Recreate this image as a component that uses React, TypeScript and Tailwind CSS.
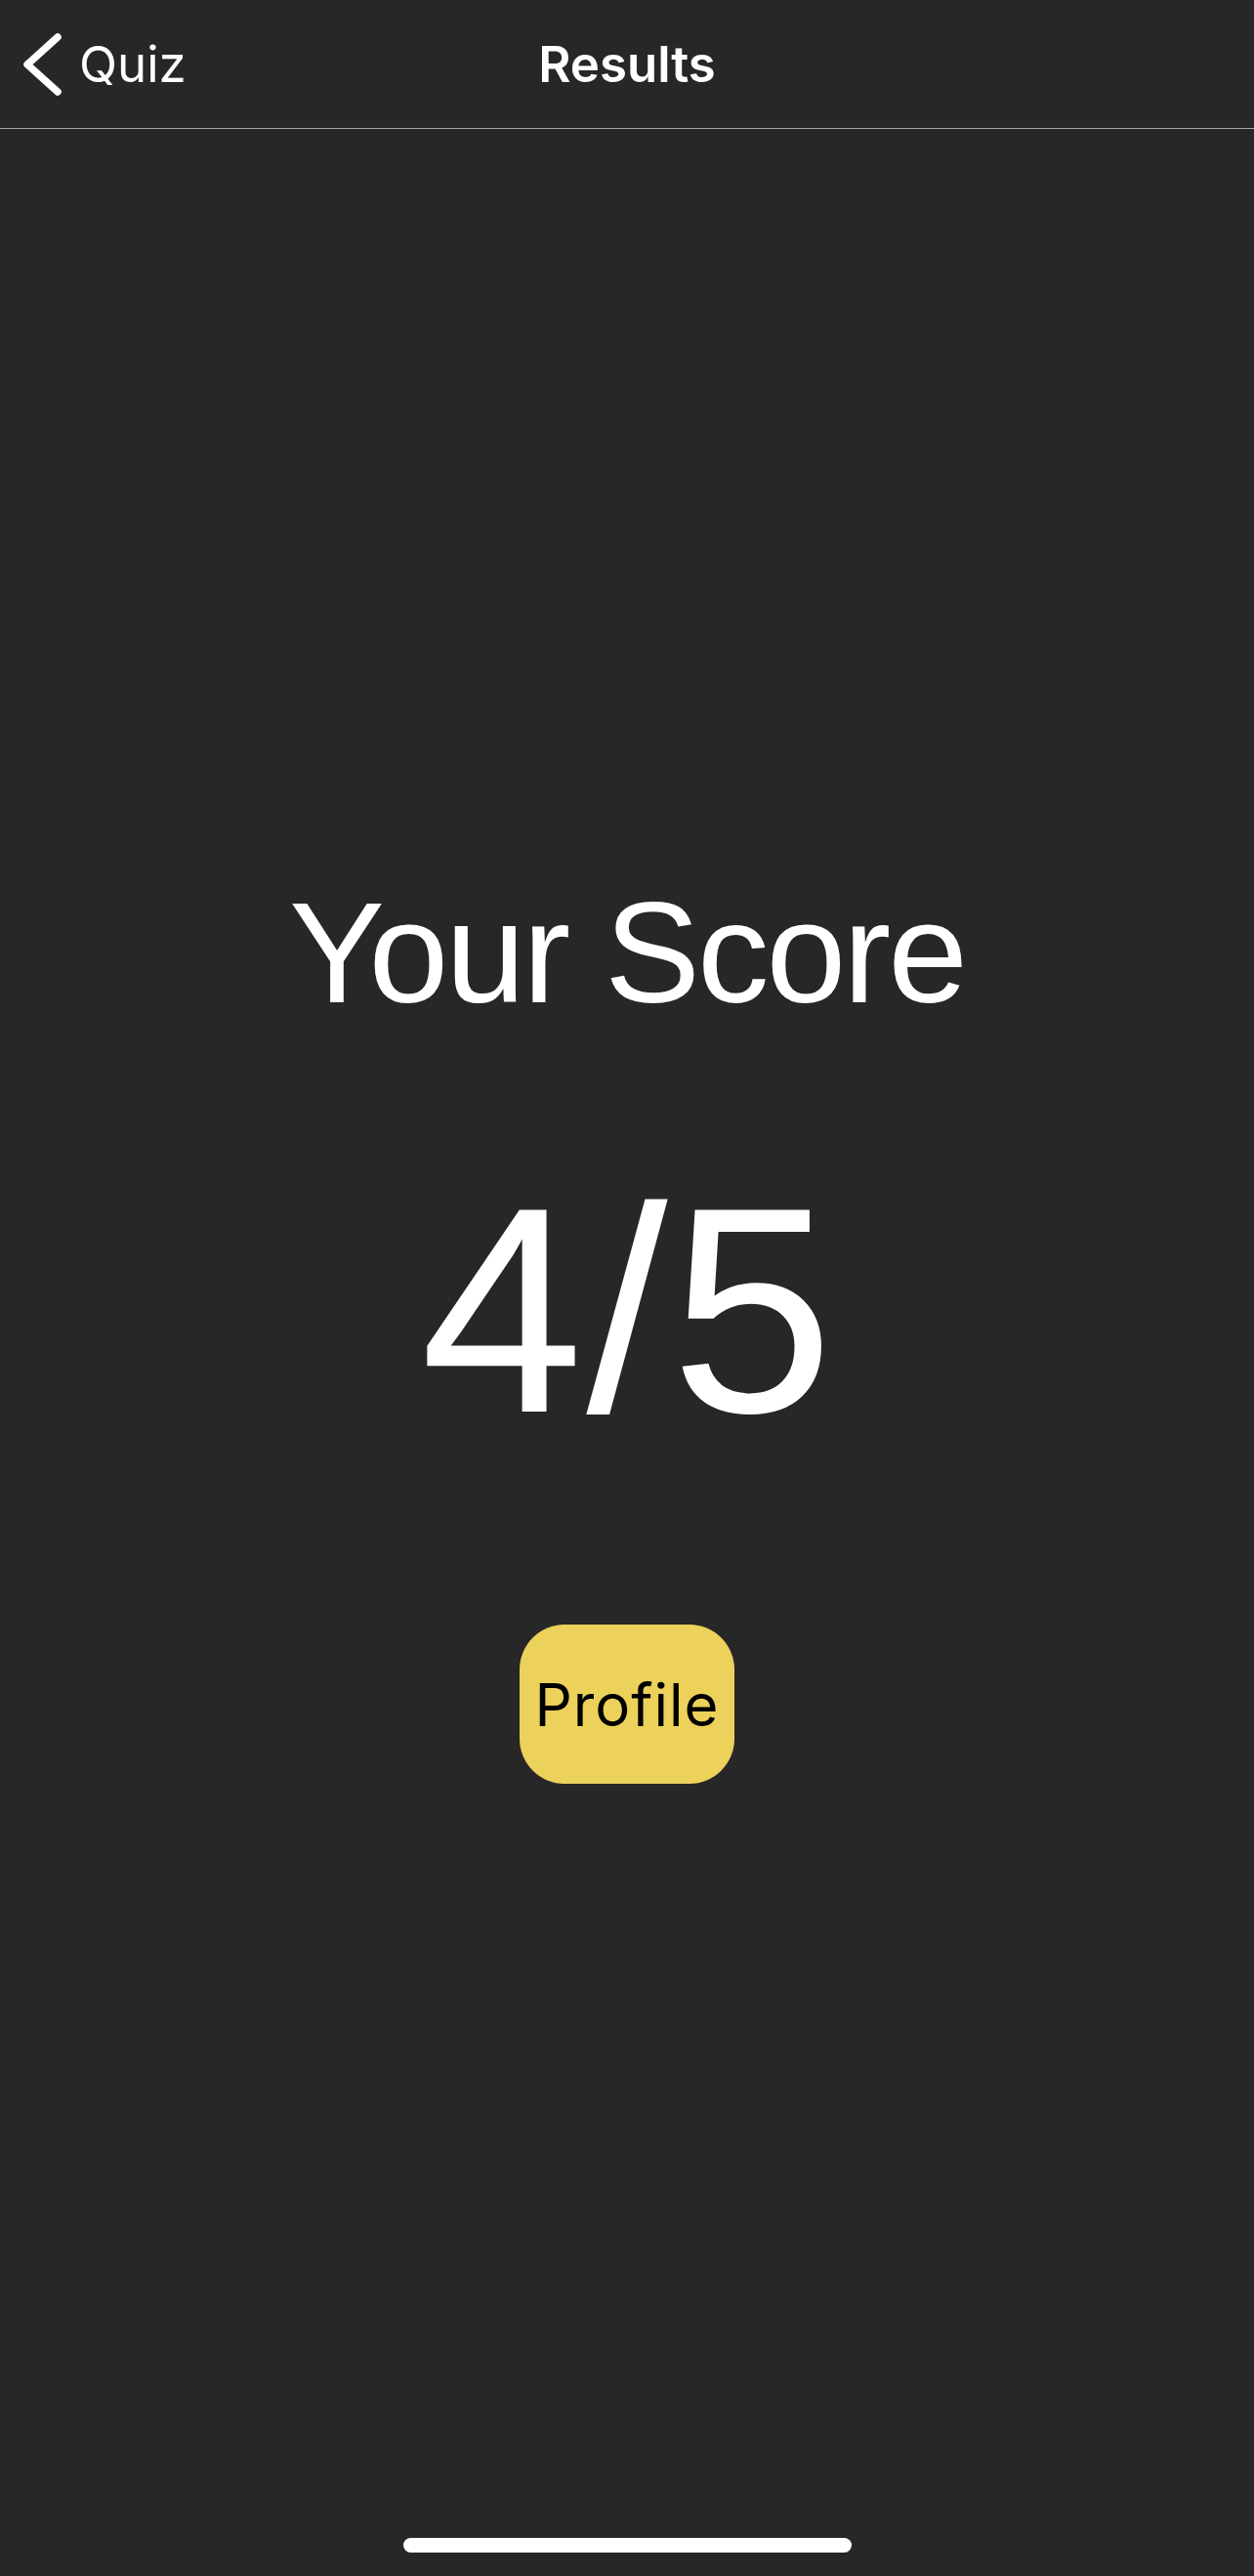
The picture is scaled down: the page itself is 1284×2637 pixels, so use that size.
import React from "react";

export default function App() {
  return (
    <div className="w-[1284px] h-[2637px] bg-[#272727] flex flex-col text-white overflow-hidden">
      <header className="relative h-[132px] shrink-0 flex items-center border-b border-[#a8a8a8]">
        <div className="flex items-center pl-[24px] gap-[17px]">
          <svg width="40" height="64" viewBox="0 0 40 64" fill="none">
            <polyline
              points="35,4 4,32 35,60"
              stroke="white"
              strokeWidth="7.5"
              strokeLinecap="round"
              strokeLinejoin="round"
            />
          </svg>
          <span
            className="text-[51px] leading-none"
            style={{ fontFamily: "Inter, 'Noto Sans', sans-serif" }}
          >
            Quiz
          </span>
        </div>
        <div
          className="absolute left-0 right-0 text-center text-[51px] font-semibold leading-none pointer-events-none"
          style={{ fontFamily: "Inter, 'Noto Sans', sans-serif" }}
        >
          Results
        </div>
      </header>
      <main
        className="flex-1 flex flex-col items-center pt-[768px]"
        style={{ fontFamily: "'Liberation Sans', Arial, sans-serif" }}
      >
        <div className="text-[147px] leading-[150px] tracking-[-3px]">Your Score</div>
        <div className="mt-[141px] text-[300px] leading-[300px] tracking-[3px] pl-[3px]">4/5</div>
        <button
          className="mt-[172px] w-[220px] h-[163px] rounded-[46px] bg-[#ecd15a] text-black text-[60px] tracking-[1px] flex items-center justify-center"
          style={{ fontFamily: "Inter, 'Noto Sans', sans-serif" }}
        >
          Profile
        </button>
      </main>
      <div className="shrink-0 flex justify-center pb-[24px]">
        <div className="w-[459px] h-[15px] rounded-full bg-white" />
      </div>
    </div>
  );
}
